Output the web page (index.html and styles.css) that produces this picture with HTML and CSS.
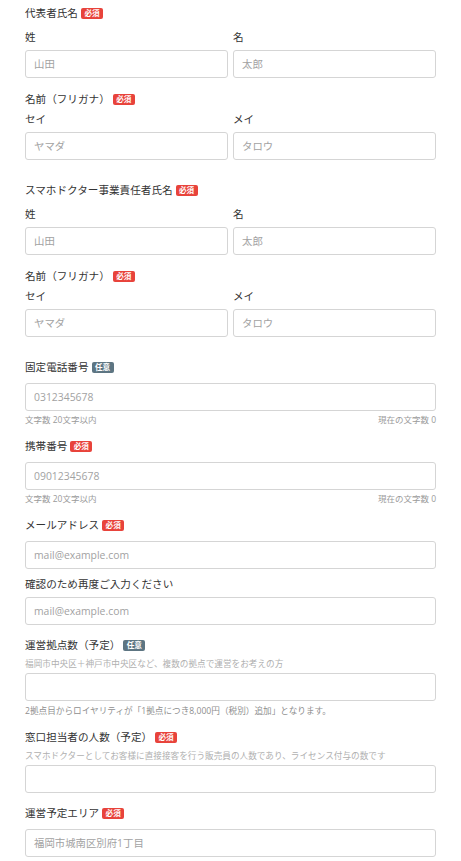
FILE: index.html
```html
<!DOCTYPE html>
<html lang="ja">
<head>
<meta charset="utf-8">
<title>申込フォーム</title>
<link rel="stylesheet" href="styles.css">
</head>
<body>
<form class="form">
  <section class="name-block">
    <div class="title">代表者氏名<span class="badge badge--req">必須</span></div>
    <div class="pair">
      <div class="col"><div class="sub">姓</div><input class="input" placeholder="山田"></div>
      <div class="col"><div class="sub">名</div><input class="input" placeholder="太郎"></div>
    </div>
    <div class="title title--kana">名前（フリガナ）<span class="badge badge--req">必須</span></div>
    <div class="pair">
      <div class="col"><div class="sub sub--kana">セイ</div><input class="input" placeholder="ヤマダ"></div>
      <div class="col"><div class="sub sub--kana">メイ</div><input class="input" placeholder="タロウ"></div>
    </div>
  </section>

  <section class="name-block">
    <div class="title">スマホドクター事業責任者氏名<span class="badge badge--req">必須</span></div>
    <div class="pair">
      <div class="col"><div class="sub">姓</div><input class="input" placeholder="山田"></div>
      <div class="col"><div class="sub">名</div><input class="input" placeholder="太郎"></div>
    </div>
    <div class="title title--kana">名前（フリガナ）<span class="badge badge--req">必須</span></div>
    <div class="pair">
      <div class="col"><div class="sub sub--kana">セイ</div><input class="input" placeholder="ヤマダ"></div>
      <div class="col"><div class="sub sub--kana">メイ</div><input class="input" placeholder="タロウ"></div>
    </div>
  </section>

  <div class="field">
    <div class="label">固定電話番号<span class="badge badge--opt">任意</span></div>
    <input class="input" placeholder="0312345678">
    <div class="count"><span>文字数 20文字以内</span><span>現在の文字数 0</span></div>
  </div>

  <div class="field">
    <div class="label">携帯番号<span class="badge badge--req">必須</span></div>
    <input class="input" placeholder="09012345678">
    <div class="count"><span>文字数 20文字以内</span><span>現在の文字数 0</span></div>
  </div>

  <div class="field field--mail">
    <div class="label">メールアドレス<span class="badge badge--req">必須</span></div>
    <input class="input" placeholder="mail@example.com">
    <div class="label label--plain">確認のため再度ご入力ください</div>
    <input class="input" placeholder="mail@example.com">
  </div>

  <div class="field">
    <div class="label label--help">運営拠点数（予定）<span class="badge badge--opt">任意</span></div>
    <div class="help">福岡市中央区＋神戸市中央区など、複数の拠点で運営をお考えの方</div>
    <input class="input" placeholder="">
    <div class="note">2拠点目からロイヤリティが「1拠点につき8,000円（税別）追加」となります。</div>
  </div>

  <div class="field">
    <div class="label label--help">窓口担当者の人数（予定）<span class="badge badge--req">必須</span></div>
    <div class="help">スマホドクターとしてお客様に直接接客を行う販売員の人数であり、ライセンス付与の数です</div>
    <input class="input" placeholder="">
  </div>

  <div class="field">
    <div class="label">運営予定エリア<span class="badge badge--req">必須</span></div>
    <input class="input" placeholder="福岡市城南区別府1丁目">
  </div>
</form>
</body>
</html>
```

FILE: styles.css
```css
* { box-sizing: border-box; }
html, body { margin: 0; padding: 0; background: #fff; }
body {
  font-family: "Open Sans", "Noto Sans CJK JP", sans-serif;
  color: #333;
  font-size: 10.6px;
}
.form {
  padding: 5px 25px 0 25px;
  display: flex;
  flex-direction: column;
}
.name-block { margin-bottom: 22px; }
.title, .label {
  display: flex;
  align-items: center;
  line-height: 16px;
  height: 16px;
  white-space: nowrap;
}
.title { margin-bottom: 8px; }
.title--kana { margin-top: 13px; margin-bottom: 4px; }
.badge {
  display: inline-flex;
  align-items: center;
  justify-content: center;
  width: 22px;
  height: 11px;
  margin-left: 3px;
  border-radius: 2px;
  color: #fff;
  font-size: 7.6px;
  font-weight: 700;
  line-height: 11px;
}
.badge--req { background: #e8433b; }
.badge--opt { background: #5d7582; }
.pair {
  display: grid;
  grid-template-columns: 1fr 1fr;
  column-gap: 5px;
}
.col { display: flex; flex-direction: column; }
.sub { line-height: 16px; margin-bottom: 5px; }
.sub--kana { margin-bottom: 5px; }
.input {
  display: block;
  width: 100%;
  height: 28px;
  margin: 0;
  padding: 0 8px;
  border: 1px solid #d5d5d5;
  border-radius: 3px;
  background: #fff;
  font-family: "Open Sans", "Noto Sans CJK JP", sans-serif;
  font-size: 10.4px;
  color: #333;
  outline: none;
}
.input::placeholder { color: #a2a2a2; opacity: 1; }
.field { margin-bottom: 12px; display: flex; flex-direction: column; }
.label { margin-bottom: 8px; }
.label--plain { margin-top: 7px; margin-bottom: 5px; }
.label--help { margin-bottom: 5px; }
.count {
  display: flex;
  justify-content: space-between;
  margin-top: 3px;
  font-size: 8.5px;
  line-height: 12px;
  color: #9a9a9a;
}
.field--mail { margin-bottom: 12px; }
.help {
  font-size: 8.65px;
  line-height: 12px;
  color: #b0b0b0;
  margin-bottom: 3px;
  white-space: nowrap;
}
.note {
  margin-top: 4px;
  font-size: 8.65px;
  line-height: 12px;
  color: #8f8f8f;
  white-space: nowrap;
}
```
